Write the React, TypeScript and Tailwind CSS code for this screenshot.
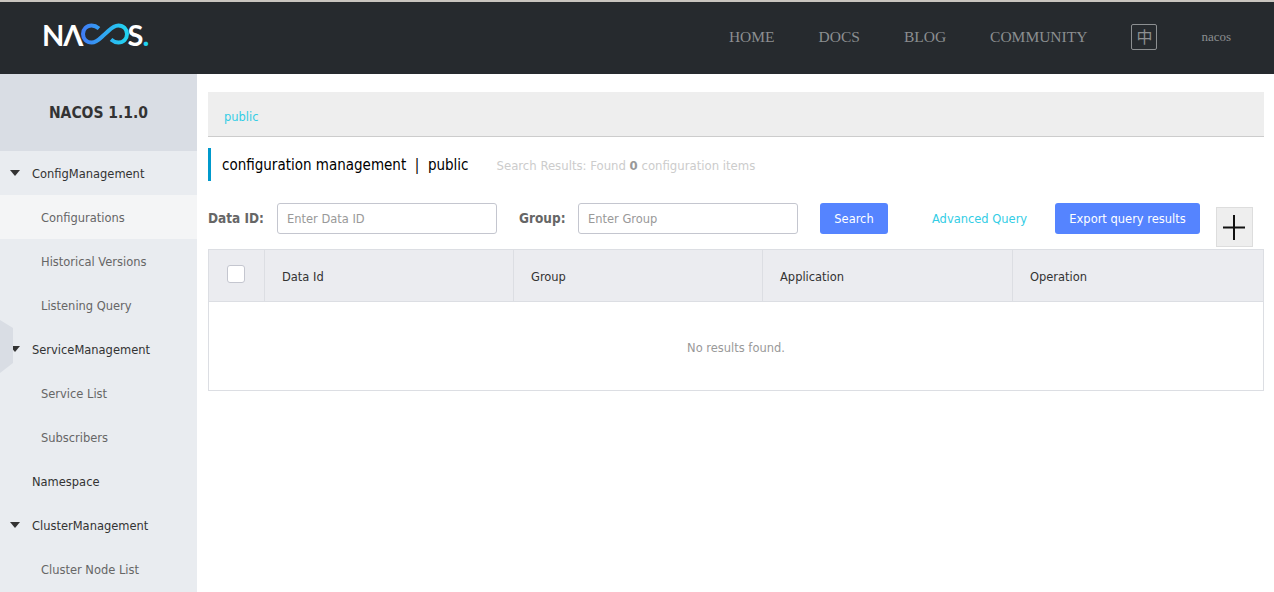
const font = "font-['DejaVu_Sans_Condensed']";

const menu = [
  { label: "ConfigManagement", group: true },
  { label: "Configurations", active: true },
  { label: "Historical Versions" },
  { label: "Listening Query" },
  { label: "ServiceManagement", group: true },
  { label: "Service List" },
  { label: "Subscribers" },
  { label: "Namespace", plain: true },
  { label: "ClusterManagement", group: true },
  { label: "Cluster Node List" },
];

const navLinks = ["HOME", "DOCS", "BLOG", "COMMUNITY"];

function Logo() {
  return (
    <div className="-mt-[6px] ml-[42px] flex items-center font-['Lato'] text-[29px] leading-none font-bold text-white" aria-label="NACOS.">
      <span>N</span>
      <span className="-ml-[1px]">Λ</span>
      <svg width="50" height="22" viewBox="0 0 50 22" fill="none" className="-mr-[1px] -ml-[3px]">
        <defs>
          <linearGradient id="nacos-loop" x1="0" x2="1" y1="0" y2="0">
            <stop offset="0" stopColor="#3f7df4" />
            <stop offset="1" stopColor="#21d4f0" />
          </linearGradient>
        </defs>
        <path
          d="M19 5.500C16.500 3.400 14.400 2.500 11.600 2.500 6.600 2.500 3 6.200 3 11s3.600 8.500 8.600 8.500c6 0 9-5 13.400-8.500s7.400-8.500 13.400-8.500C43.400 2.500 47 6.200 47 11s-3.600 8.500-8.600 8.500c-2.800 0-4.900-.9-7.400-3"
          stroke="url(#nacos-loop)"
          strokeWidth="4"
        />
      </svg>
      <span className="-ml-[2px]">S</span>
      <span className="-ml-[1px] text-[#21d4f0]">.</span>
    </div>
  );
}

function Header() {
  return (
    <header className="flex h-[74px] items-center border-t-2 border-[#c9c5bf] bg-[#262a2e] pb-[2px]">
      <Logo />
      <nav className="ml-auto flex items-center gap-[44px] font-['Liberation_Serif'] text-[15.5px] text-[#8c8f91]">
        {navLinks.map((l) => (
          <span key={l}>{l}</span>
        ))}
        <span className="flex h-[26px] w-[26px] items-center justify-center rounded-[2px] border border-[#8c8f91] pb-[2px] font-['Noto_Sans_CJK_SC'] text-[16px] leading-none">
          中
        </span>
        <span className="mr-[43px] text-[13px]">nacos</span>
      </nav>
    </header>
  );
}

function Sidebar() {
  return (
    <aside className="relative h-full w-[197px] shrink-0 overflow-hidden bg-[#e9ecf0]">
      <div className="flex h-[77px] items-center justify-center bg-[#d9dde4] pt-[2px] text-[15.5px] font-bold text-[#333]">
        NACOS 1.1.0
      </div>
      {menu.map((m) => (
        <div
          key={m.label}
          className={
            m.group || m.plain
              ? "relative flex h-11 items-center pt-[2px] pl-8 text-[12.75px] text-[#333]"
              : m.active
                ? "flex h-11 items-center bg-[#f4f5f6] pt-[2px] pl-[41px] text-[12.75px] text-[#666]"
                : "flex h-11 items-center pt-[2px] pl-[41px] text-[12.75px] text-[#666]"
          }
        >
          {m.group && (
            <span className="absolute top-[19px] left-[10px] h-0 w-0 border-x-[5px] border-t-[6px] border-x-transparent border-t-[#333]" />
          )}
          {m.label}
        </div>
      ))}
      <div className="absolute top-[246px] left-0 h-[53px] w-[13px] bg-[#d9dde4] [clip-path:polygon(0_0,100%_15%,100%_81%,0_100%)]" />
    </aside>
  );
}

function Toolbar() {
  return (
    <div className="mt-[22px] flex items-start text-[12.75px]">
      <label className="flex h-[31px] w-[69px] items-center text-[13.5px] font-bold text-[#666]">Data ID:</label>
      <div className="flex h-[31px] w-[220px] items-center rounded-[3px] border border-[#c4c6cf] pl-[9px] text-[#999]">Enter Data ID</div>
      <label className="ml-[22px] flex h-[31px] w-[59px] items-center text-[13.5px] font-bold text-[#666]">Group:</label>
      <div className="flex h-[31px] w-[220px] items-center rounded-[3px] border border-[#c4c6cf] pl-[9px] text-[#999]">Enter Group</div>
      <button className="ml-[22px] flex h-[31px] w-[68px] items-center justify-center rounded-[3px] bg-[#5584ff] text-white">Search</button>
      <span className="ml-[44px] flex h-[31px] w-[95px] items-center whitespace-nowrap text-[#33cde5]">Advanced Query</span>
      <button className="ml-[28px] flex h-[31px] w-[145px] items-center justify-center rounded-[3px] bg-[#5584ff] whitespace-nowrap text-white">Export query results</button>
      <button className="mt-1 ml-4 flex h-10 w-[37px] items-center justify-center border border-[#ddd] bg-[#eee] pr-[2px]">
        <svg width="22" height="25" viewBox="0 0 22 25"><path d="M11 0v25M0 12.500h22" stroke="#111" strokeWidth="2" /></svg>
      </button>
    </div>
  );
}

function ResultTable() {
  const cols = [
    { label: "Data Id", w: "w-[249px]" },
    { label: "Group", w: "w-[249px]" },
    { label: "Application", w: "w-[250px]" },
    { label: "Operation", w: "flex-1" },
  ];
  return (
    <div className="mt-[2px] border border-[#dcdee3] text-[12.75px]">
      <div className="flex h-[52px] border-b border-[#dcdee3] bg-[#ebecf0] text-[#333]">
        <div className="flex w-[56px] items-center border-r border-[#dcdee3] pb-[3px] pl-[18px]">
          <span className="h-[18px] w-[18px] rounded-[3px] border border-[#c4c6cf] bg-white" />
        </div>
        {cols.map((c, i) => (
          <div key={c.label} className={`${c.w} flex items-center pt-[2px] pl-[17px] ${i < 3 ? "border-r border-[#dcdee3]" : ""}`}>
            {c.label}
          </div>
        ))}
      </div>
      <div className="flex h-[88px] items-center justify-center pt-[3px] text-[#999]">No results found.</div>
    </div>
  );
}

export default function App() {
  return (
    <div className={`${font} h-[592px] w-full overflow-hidden bg-white`}>
      <Header />
      <div className="flex h-[518px]">
        <Sidebar />
        <main className="flex-1 pt-[18px] pr-[10px] pl-[11px]">
          <div className="flex h-[45px] items-center border-b border-[#ccc] bg-[#eee] pt-[5px] pl-4 text-[12.75px] text-[#33cde5]">public</div>
          <div className="mt-[11px] flex h-[33px] items-center border-l-[3px] border-[#09c] pt-[2px] pl-[11px]">
            <span className="text-[15px] whitespace-pre text-black">configuration management  |  public</span>
            <span className="ml-7 text-[13px] text-[#ccc]">
              Search Results: Found <b className="text-[#999]">0</b> configuration items
            </span>
          </div>
          <Toolbar />
          <ResultTable />
        </main>
      </div>
    </div>
  );
}
